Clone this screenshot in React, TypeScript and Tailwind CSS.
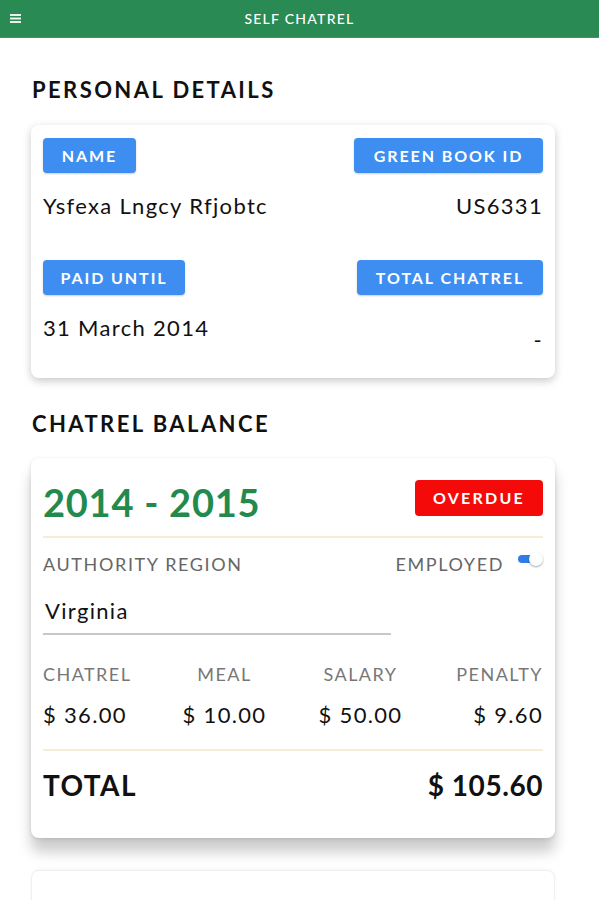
import React from "react";

const font = { fontFamily: "Lato, 'Noto Sans', sans-serif" };

function Badge({ children, className = "" }: { children: React.ReactNode; className?: string }) {
  return (
    <div
      className={`h-[35px] flex items-center justify-center rounded-[4px] bg-[#3d8ef0] text-white text-[16px] font-bold tracking-[0.12em] shadow-[0_1px_2px_rgba(0,0,0,0.2)] ${className}`}
    >
      {children}
    </div>
  );
}

export default function App() {
  return (
    <div className="w-[599px] min-h-[900px] bg-white text-[#111]" style={font}>
      <header className="h-[38px] bg-[#2a8a54] border-b border-[#3a9a64] flex items-center relative">
        <svg className="absolute left-[10px] top-[14px]" width="11" height="9" viewBox="0 0 11 9">
          <rect x="0" y="0" width="11" height="2" fill="#e8f3ec" />
          <rect x="0" y="3.5" width="11" height="2" fill="#e8f3ec" />
          <rect x="0" y="7" width="11" height="2" fill="#e8f3ec" />
        </svg>
        <div className="flex-1 text-center text-white text-[14px] font-medium tracking-[0.09em]">SELF CHATREL</div>
      </header>

      <main className="px-[31px] pb-8">
        <h2 className="mt-[38px] h-[28px] leading-[28px] text-[22px] font-bold tracking-[0.11em] pl-[1px]">
          PERSONAL DETAILS
        </h2>

        <section className="mt-[21px] w-[524px] h-[253px] rounded-[8px] bg-white shadow-[0_3px_8px_rgba(0,0,0,0.22)] px-[12px] pt-[13px]">
          <div className="flex justify-between">
            <Badge className="w-[93px]">NAME</Badge>
            <Badge className="w-[189px]">GREEN BOOK ID</Badge>
          </div>
          <div className="flex justify-between mt-[19px] h-[28px] leading-[28px] text-[22px] tracking-[0.06em]">
            <span>Ysfexa Lngcy Rfjobtc</span>
            <span>US6331</span>
          </div>
          <div className="flex justify-between mt-[40px]">
            <Badge className="w-[142px]">PAID UNTIL</Badge>
            <Badge className="w-[186px]">TOTAL CHATREL</Badge>
          </div>
          <div className="flex justify-between items-start mt-[19px] h-[28px] leading-[28px] text-[22px] tracking-[0.06em]">
            <span>31 March 2014</span>
            <span className="mt-[12px]">-</span>
          </div>
        </section>

        <h2 className="mt-[32px] h-[28px] leading-[28px] text-[22px] font-bold tracking-[0.11em] pl-[1px]">
          CHATREL BALANCE
        </h2>

        <section className="mt-[20px] w-[524px] h-[380px] rounded-[8px] bg-white shadow-[0_14px_14px_rgba(0,0,0,0.2),0_1px_4px_rgba(0,0,0,0.12)] px-[12px] pt-[22px]">
          <div className="flex justify-between items-start">
            <span className="text-[38px] leading-[44px] font-bold text-[#228a4c] tracking-[0.02em]">2014 - 2015</span>
            <div className="w-[128px] h-[36px] flex items-center justify-center rounded-[4px] bg-[#f50a0a] text-white text-[16px] font-bold tracking-[0.14em]">
              OVERDUE
            </div>
          </div>
          <div className="mt-[12px] h-[2px] bg-[#f7ecd6]" />
          <div className="mt-[14px] flex justify-between items-center h-[24px] text-[18px] text-[#666] tracking-[0.09em]">
            <span>AUTHORITY REGION</span>
            <div className="flex items-center gap-[14px]">
              <span>EMPLOYED</span>
              <div className="relative w-[25px] h-[14px] mb-[10px]">
                <div className="absolute left-0 top-[3px] w-[20px] h-[8px] rounded-full bg-[#2f7de6]" />
                <div className="absolute right-0 top-0 w-[14px] h-[14px] rounded-full bg-white shadow-[0_1px_2px_rgba(0,0,0,0.35)]" />
              </div>
            </div>
          </div>
          <div className="mt-[21px] w-[348px] border-b-[2px] border-[#c8c8c8] pb-[8px] pl-[2px] h-[38px] text-[22px] leading-[28px] tracking-[0.06em]">
            Virginia
          </div>
          <div className="mt-[26px] grid grid-cols-4 h-[24px] text-[18px] text-[#777] tracking-[0.08em] items-center">
            <span>CHATREL</span>
            <span className="text-center -ml-[12px]">MEAL</span>
            <span className="text-center mr-[-10px]">SALARY</span>
            <span className="text-right">PENALTY</span>
          </div>
          <div className="mt-[16px] grid grid-cols-4 h-[28px] text-[22px] leading-[28px] items-center tracking-[0.06em]">
            <span>$ 36.00</span>
            <span className="text-center -ml-[12px]">$ 10.00</span>
            <span className="text-center mr-[-10px]">$ 50.00</span>
            <span className="text-right">$ 9.60</span>
          </div>
          <div className="mt-[20px] h-[2px] bg-[#f7ecd6]" />
          <div className="mt-[17px] flex justify-between h-[34px] leading-[34px] text-[28px] font-bold tracking-[0.05em]">
            <span>TOTAL</span>
            <span className="tracking-[0.02em]">$ 105.60</span>
          </div>
        </section>

        <section className="mt-[32px] w-[524px] h-[60px] rounded-[8px] bg-white border border-[#f0f0f0] shadow-[0_-1px_3px_rgba(0,0,0,0.04)]" />
      </main>
    </div>
  );
}
